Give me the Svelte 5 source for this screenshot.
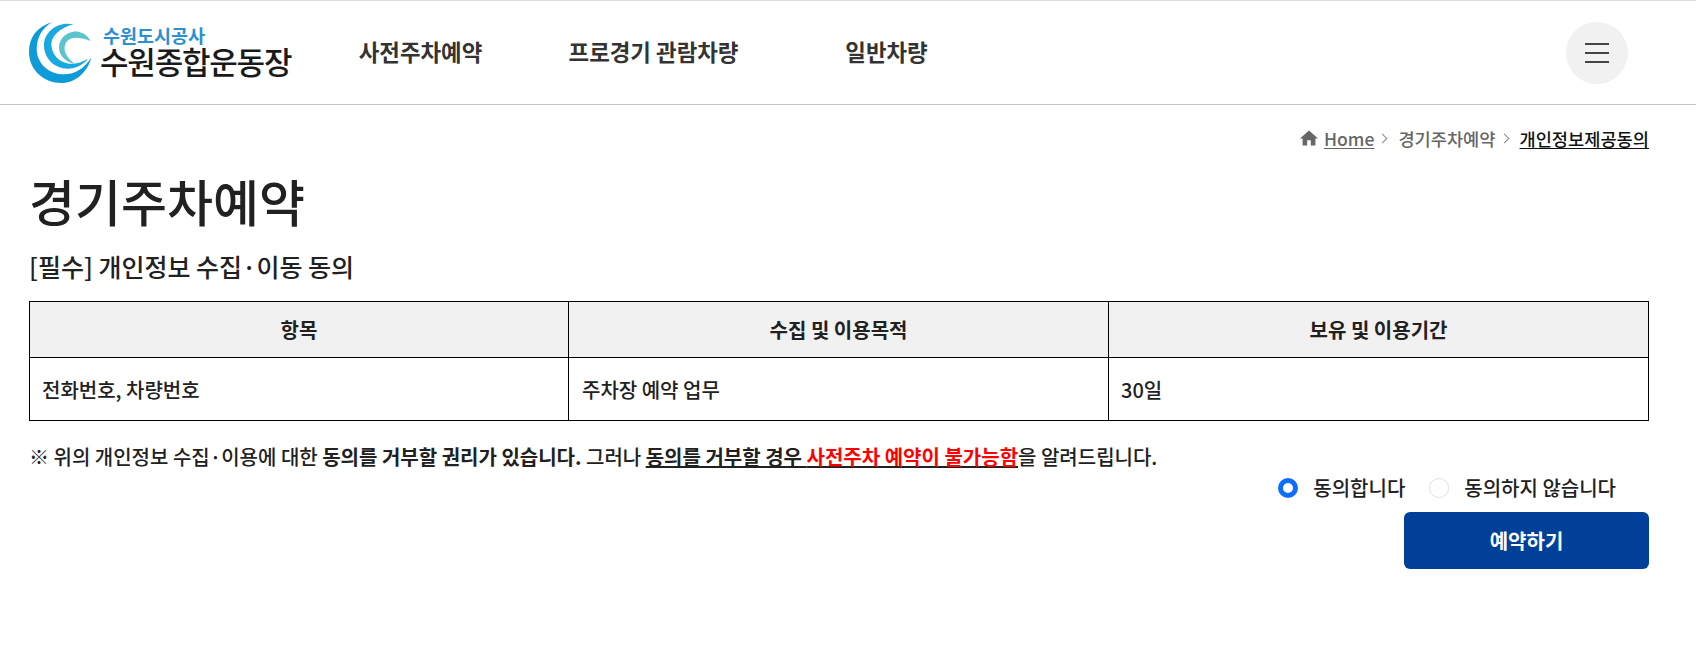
<script lang="ts">
	const columns = ['항목', '수집 및 이용목적', '보유 및 이용기간'];
	const cells = ['전화번호, 차량번호', '주차장 예약 업무', '30일'];
	const navItems = ['사전주차예약', '프로경기 관람차량', '일반차량'];
	let agree = $state('yes');
</script>

<header class="site-header">
	<a class="logo" href="#home">
		<svg class="logo-mark" viewBox="0 0 228 216" width="76" height="72" aria-hidden="true">
			<path d="M85 15 C40 28 15 60 15 105 C15 160 60 198 112 198 C155 198 190 165 202 122 C182 152 155 172 120 172 C75 172 38 140 38 95 C38 62 55 32 85 15 Z" fill="#0e9bd7" />
			<path d="M148 22 C100 12 60 45 60 85 C60 125 92 155 130 155 C155 155 178 143 192 125 C175 135 155 142 135 140 C105 137 82 112 82 82 C82 58 108 32 148 22 Z" fill="#17a9e0" />
			<path d="M200 72 C185 48 165 42 148 44 C122 48 105 68 105 92 C105 115 125 135 152 140 C132 125 120 108 122 90 C124 68 145 50 200 72 Z" fill="#5cc5cb" />
		</svg>
		<span class="logo-text">
			<span class="logo-org">수원도시공사</span>
			<span class="logo-name">수원종합운동장</span>
		</span>
	</a>
	<nav class="main-nav">
		{#each navItems as item}
			<a href="#nav">{item}</a>
		{/each}
	</nav>
	<button class="menu-btn" aria-label="menu">
		<span></span><span></span><span></span>
	</button>
</header>

<main class="content">
	<div class="breadcrumb">
		<svg class="home-icon" viewBox="0 0 18 16" width="18" height="16" aria-hidden="true">
			<path d="M9 0.5 L18 8.5 H15.4 V15.5 H10.8 V10.2 H7.2 V15.5 H2.6 V8.5 H0 Z" fill="#666" />
		</svg>
		<a class="home-link" href="#home">Home</a>
		<span class="chev"></span>
		<span class="crumb">경기주차예약</span>
		<span class="chev"></span>
		<a class="current" href="#current">개인정보제공동의</a>
	</div>

	<h1>경기주차예약</h1>
	<h2>[필수] 개인정보 수집·이동 동의</h2>

	<table>
		<thead>
			<tr>
				{#each columns as col}
					<th>{col}</th>
				{/each}
			</tr>
		</thead>
		<tbody>
			<tr>
				{#each cells as cell}
					<td>{cell}</td>
				{/each}
			</tr>
		</tbody>
	</table>

	<p class="notice">
		※ 위의 개인정보 수집·이용에 대한 <b>동의를 거부할 권리가 있습니다.</b> 그러나 <b class="u">동의를 거부할 경우 <span class="red">사전주차 예약이 불가능함</span></b>을 알려드립니다.
	</p>

	<div class="choices">
		<label class="choice">
			<input type="radio" name="agree" value="yes" bind:group={agree} />
			동의합니다
		</label>
		<label class="choice">
			<input type="radio" name="agree" value="no" bind:group={agree} />
			동의하지 않습니다
		</label>
	</div>

	<div class="actions">
		<button class="submit">예약하기</button>
	</div>
</main>

<style>
	:global(body) {
		font-family: "Noto Sans CJK KR", "Noto Sans", sans-serif;
		color: #212121;
		background: #fff;
	}

	a {
		color: inherit;
		text-decoration: none;
	}

	.site-header {
		display: flex;
		align-items: center;
		height: 105px;
		box-sizing: border-box;
		padding: 0 68px 0 24px;
		border-top: 1px solid #e0e0e0;
		border-bottom: 1px solid #c4c4c4;
	}

	.logo {
		display: flex;
		align-items: center;
		width: 280px;
		color: #1a1a1a;
	}

	.logo-text {
		display: flex;
		flex-direction: column;
		padding-bottom: 3px;
		line-height: 1;
	}

	.logo-org {
		font-size: 18.5px;
		font-weight: 700;
		color: #2b8fd0;
		margin-left: 3px;
		line-height: 20px;
	}

	.logo-name {
		font-size: 31px;
		font-weight: 500;
		letter-spacing: -1.2px;
		line-height: 32px;
	}

	.main-nav {
		display: flex;
		flex: 1;
		margin-bottom: 4px;
	}

	.main-nav a {
		width: 233px;
		text-align: center;
		font-size: 22.4px;
		font-weight: 700;
		color: #333;
	}

	.menu-btn {
		display: flex;
		flex-direction: column;
		align-items: center;
		justify-content: center;
		gap: 7px;
		width: 62px;
		height: 62px;
		padding: 0;
		border: 0;
		border-radius: 50%;
		background: #f1f1f1;
	}

	.menu-btn span {
		display: block;
		width: 24px;
		height: 2px;
		background: #444;
	}

	.content {
		padding: 0 47px 0 29px;
	}

	.breadcrumb {
		display: flex;
		align-items: center;
		justify-content: flex-end;
		height: 26px;
		margin-top: 20px;
		font-size: 17.6px;
		font-weight: 500;
		color: #666;
	}

	.home-icon {
		margin-right: 6px;
	}

	.home-link {
		font-weight: 500;
		text-decoration: underline;
		text-underline-offset: 2px;
	}

	.chev {
		width: 6px;
		height: 6px;
		margin: 0 12px 0 5px;
		border-top: 1px solid #888;
		border-right: 1px solid #888;
		transform: rotate(45deg);
	}

	.current {
		color: #111;
		text-decoration: underline;
		text-underline-offset: 2px;
	}

	h1 {
		margin: 14px 0 0;
		font-size: 50px;
		font-weight: 500;
		line-height: 70px;
	}

	h2 {
		margin: 13px 0 0;
		font-size: 25px;
		font-weight: 500;
		line-height: 36px;
	}

	table {
		width: 100%;
		margin-top: 17px;
		table-layout: fixed;
		border-collapse: collapse;
		font-size: 20px;
	}

	th,
	td {
		border: 1px solid #000;
	}

	th {
		height: 55px;
		padding: 0;
		background: #f1f1f1;
		font-weight: 700;
	}

	th:first-child {
		width: 538px;
	}

	th:nth-child(2) {
		width: 539px;
	}

	td {
		height: 62px;
		padding: 0 12px;
		font-weight: 500;
	}

	td:nth-child(2) {
		padding-left: 13px;
	}

	.notice {
		margin: 21px 0 0;
		font-size: 20px;
		font-weight: 500;
		line-height: 30px;
	}

	.notice b {
		font-weight: 700;
	}

	.u {
		text-decoration: underline;
	}

	.red {
		color: #f00;
	}

	.choices {
		display: flex;
		justify-content: flex-end;
		gap: 24px;
		padding-right: 33px;
		margin-top: 1px;
	}

	.choice {
		display: flex;
		align-items: center;
		gap: 15px;
		font-size: 20px;
		font-weight: 500;
		line-height: 30px;
	}

	.choice input {
		appearance: none;
		width: 20px;
		height: 20px;
		margin: 0;
		border: 1px solid #dee2e6;
		border-radius: 50%;
		background: #fff;
	}

	.choice input:checked {
		border: 5px solid #0d6efd;
	}

	.actions {
		display: flex;
		justify-content: flex-end;
		margin-top: 9px;
	}

	.submit {
		width: 245px;
		height: 57px;
		border: 0;
		border-radius: 6px;
		background: #004098;
		color: #fff;
		font-family: inherit;
		font-size: 20px;
		font-weight: 700;
	}
</style>
